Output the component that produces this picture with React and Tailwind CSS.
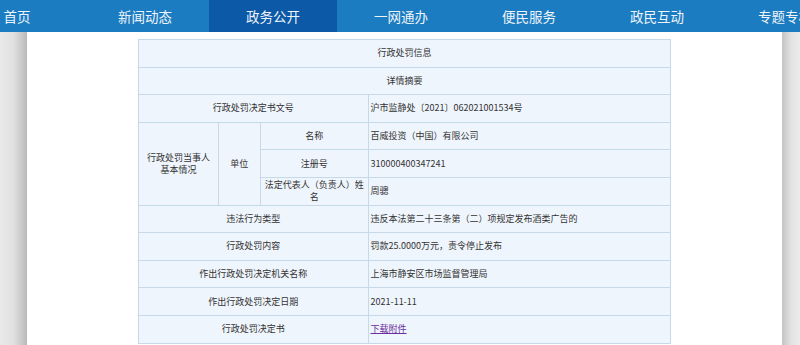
const navItems = ['首页', '新闻动态', '政务公开', '一网通办', '便民服务', '政民互动', '专题专栏'];

const cell = 'border border-[#c6d9e8] bg-[#eff5fc] text-center align-middle';
const val = 'border border-[#c6d9e8] bg-[#eff5fc] text-left align-middle pl-[2px]';

export default function App() {
  return (
    <div className="w-[800px] h-[345px] overflow-hidden bg-white text-[#333] font-['Noto_Sans_CJK_SC',sans-serif]">
      <div className="h-[32px] bg-[#1b7cc1] overflow-hidden">
        <div className="flex ml-[-47px] h-full">
          {navItems.map((t) => (
            <div
              key={t}
              className={
                'w-[128px] shrink-0 h-full flex items-center justify-center text-[13.5px] text-[#eef4fa] ' +
                (t === '政务公开' ? 'bg-[#0b59a7]' : '')
              }
            >
              {t}
            </div>
          ))}
        </div>
      </div>
      <div className="flex h-[313px]">
        <div className="w-[27px] bg-gradient-to-r from-[#e9e9e9] via-[#e1e1e1] to-[#b9b9b9]" />
        <div className="w-[755px] bg-white pt-[7px] flex justify-center">
          <table className="w-[533px] border-collapse text-[9px] leading-[12px] h-fit">
            <colgroup>
              <col className="w-[80px]" />
              <col className="w-[42px]" />
              <col className="w-[108px]" />
              <col className="w-[303px]" />
            </colgroup>
            <tbody>
              <tr className="h-[27.6px]">
                <td colSpan={4} className={cell}>行政处罚信息</td>
              </tr>
              <tr className="h-[27.6px]">
                <td colSpan={4} className={cell}>详情摘要</td>
              </tr>
              <tr className="h-[27.6px]">
                <td colSpan={3} className={cell}>行政处罚决定书文号</td>
                <td className={val}>沪市监静处〔2021〕062021001534号</td>
              </tr>
              <tr className="h-[27.6px]">
                <td rowSpan={3} className={cell}>行政处罚当事人<br />基本情况</td>
                <td rowSpan={3} className={cell}>单位</td>
                <td className={cell}>名称</td>
                <td className={val}>百威投资（中国）有限公司</td>
              </tr>
              <tr className="h-[27.6px]">
                <td className={cell}>注册号</td>
                <td className={val}>310000400347241</td>
              </tr>
              <tr className="h-[27.6px]">
                <td className={cell}>法定代表人（负责人）姓名</td>
                <td className={val}>周骢</td>
              </tr>
              <tr className="h-[27.6px]">
                <td colSpan={3} className={cell}>违法行为类型</td>
                <td className={val}>违反本法第二十三条第（二）项规定发布酒类广告的</td>
              </tr>
              <tr className="h-[27.6px]">
                <td colSpan={3} className={cell}>行政处罚内容</td>
                <td className={val}>罚款25.0000万元，责令停止发布</td>
              </tr>
              <tr className="h-[27.6px]">
                <td colSpan={3} className={cell}>作出行政处罚决定机关名称</td>
                <td className={val}>上海市静安区市场监督管理局</td>
              </tr>
              <tr className="h-[27.6px]">
                <td colSpan={3} className={cell}>作出行政处罚决定日期</td>
                <td className={val}>2021-11-11</td>
              </tr>
              <tr className="h-[27.6px]">
                <td colSpan={3} className={cell}>行政处罚决定书</td>
                <td className={val}>
                  <a className="text-[#6b2fa0] underline">下载附件</a>
                </td>
              </tr>
            </tbody>
          </table>
        </div>
        <div className="flex-1 bg-gradient-to-r from-[#c3c3c3] via-[#e2e2e2] to-[#ececec]" />
      </div>
    </div>
  );
}
